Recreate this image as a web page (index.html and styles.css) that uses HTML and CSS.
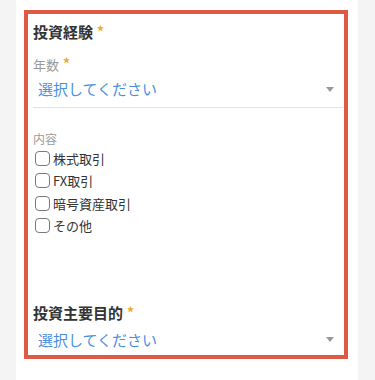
FILE: index.html
```html
<!DOCTYPE html>
<html lang="ja">
<head>
<meta charset="utf-8">
<link rel="stylesheet" href="styles.css">
</head>
<body>
<div class="card">
  <div class="highlight">
    <div class="section-title">投資経験<span class="req">*</span></div>
    <div class="label">年数<span class="req">*</span></div>
    <div class="select first"><span class="placeholder">選択してください</span><span class="arrow"></span></div>
    <div class="label content-label">内容</div>
    <ul class="checks">
      <li><span class="box"></span>株式取引</li>
      <li><span class="box"></span>FX取引</li>
      <li><span class="box"></span>暗号資産取引</li>
      <li><span class="box"></span>その他</li>
    </ul>
    <div class="section-title purpose">投資主要目的<span class="req">*</span></div>
    <div class="select last"><span class="placeholder">選択してください</span><span class="arrow"></span></div>
  </div>
</div>
</body>
</html>
```
FILE: styles.css
```css
* { box-sizing: border-box; }
html, body {
  margin: 0;
  padding: 0;
  background: #f4f4f4;
  font-family: "Noto Sans CJK JP", "Noto Sans", sans-serif;
  height: 380px;
  overflow: hidden;
}
.card {
  margin-left: 16px;
  width: 342px;
  height: 380px;
  background: #fff;
  padding-top: 10px;
}
.highlight {
  margin-left: 8px;
  width: 324px;
  height: 349px;
  border: 4px solid #de5a44;
  padding: 0 0 0 5px;
  overflow: hidden;
}
.section-title {
  font-size: 15px;
  font-weight: bold;
  color: #333;
  line-height: 20px;
  padding-top: 7px;
  height: 28px;
}
.req {
  color: #f5a623;
  font-size: 14px;
  font-weight: bold;
  margin-left: 4px;
  vertical-align: 1px;
}
.label {
  font-size: 13px;
  color: #9a9a9a;
  line-height: 16px;
  margin-top: 13px;
}
.select {
  display: flex;
  align-items: center;
  justify-content: space-between;
  padding: 0 9px 0 5px;
  margin-right: 1px;
}
.select.first {
  height: 31px;
  margin-top: 4px;
  padding-bottom: 6px;
  border-bottom: 1px solid #e2e2e2;
}
.select.last {
  height: 26px;
  margin-top: 6px;
  align-items: flex-start;
  padding-top: 0;
}
.placeholder {
  font-size: 15px;
  color: #4a90de;
  line-height: 22px;
  letter-spacing: 0;
}
.arrow {
  width: 0;
  height: 0;
  border-left: 4px solid transparent;
  border-right: 4px solid transparent;
  border-top: 5px solid #9a9a9a;
}
.select.last .arrow { margin-top: 8px; }
.content-label {
  margin-top: 23px;
  font-size: 12px;
}
.checks {
  list-style: none;
  margin: 0;
  padding: 0;
}
.checks li {
  display: flex;
  align-items: center;
  height: 22.5px;
  font-size: 13px;
  color: #333;
}
.box {
  width: 15px;
  height: 15px;
  border: 1.5px solid #7a7a7a;
  border-radius: 4px;
  margin-left: 2px;
  margin-right: 3px;
  flex: none;
}
.section-title.purpose {
  margin-top: 58px;
}
```
